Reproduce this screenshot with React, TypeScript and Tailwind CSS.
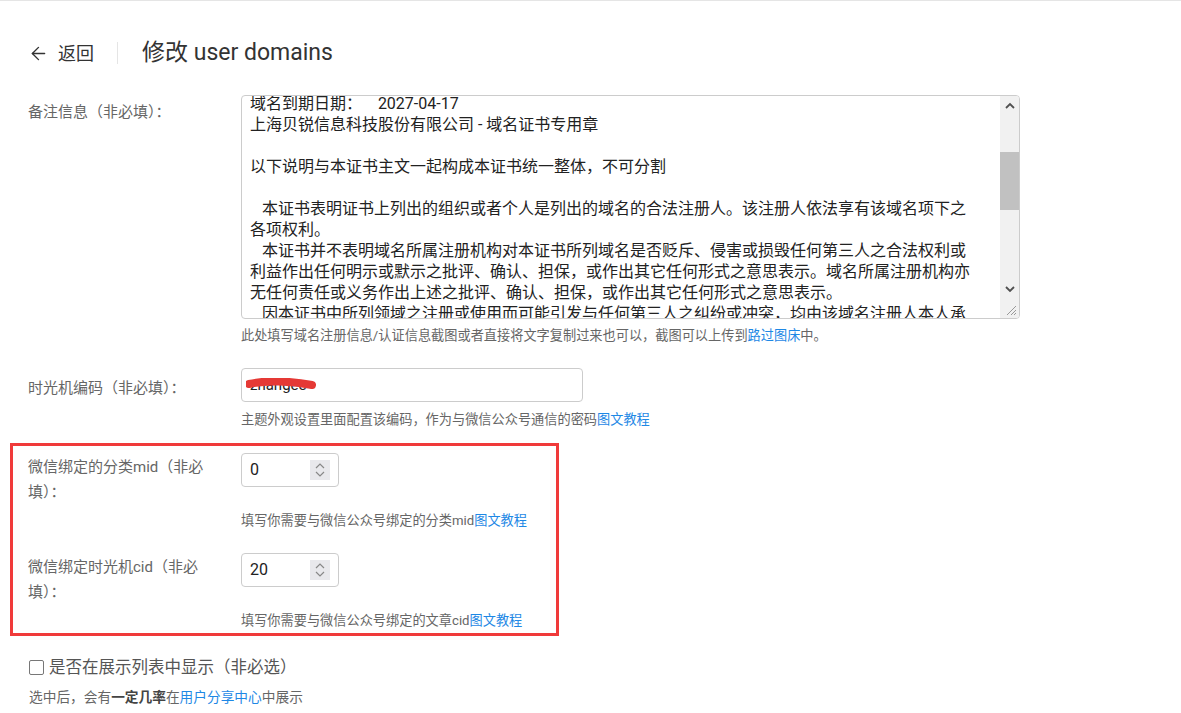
import { ArrowLeft } from 'lucide-react';

const font = { fontFamily: 'Roboto, "Noto Sans CJK SC", sans-serif' };

const noteLines = [
  '域名到期日期：\u00a0\u00a0\u00a0\u00a02027-04-17',
  '上海贝锐信息科技股份有限公司 - 域名证书专用章',
  '\u00a0',
  '以下说明与本证书主文一起构成本证书统一整体，不可分割',
  '\u00a0',
  '\u00a0\u00a0\u00a0本证书表明证书上列出的组织或者个人是列出的域名的合法注册人。该注册人依法享有该域名项下之',
  '各项权利。',
  '\u00a0\u00a0\u00a0本证书并不表明域名所属注册机构对本证书所列域名是否贬斥、侵害或损毁任何第三人之合法权利或',
  '利益作出任何明示或默示之批评、确认、担保，或作出其它任何形式之意思表示。域名所属注册机构亦',
  '无任何责任或义务作出上述之批评、确认、担保，或作出其它任何形式之意思表示。',
  '\u00a0\u00a0\u00a0因本证书中所列领域之注册或使用而可能引发与任何第三人之纠纷或冲突，均由该域名注册人本人承',
];

function Spinner() {
  return (
    <div className="w-[20px] h-[20px] bg-[#e8e8ec] flex flex-col items-center justify-center text-[#888] leading-none">
      <svg width="10" height="6" viewBox="0 0 10 6"><path d="M1 5l4-4 4 4" fill="none" stroke="currentColor" strokeWidth="1.2" /></svg>
      <svg width="10" height="6" viewBox="0 0 10 6" className="mt-[2px]"><path d="M1 1l4 4 4-4" fill="none" stroke="currentColor" strokeWidth="1.2" /></svg>
    </div>
  );
}

function NumberField({ value }: { value: string }) {
  return (
    <div className="w-[98px] h-[34px] border border-[#ccc] rounded-[4px] flex items-center justify-between pl-[8px] pr-[8px] text-[16px] text-[#222]">
      <span>{value}</span>
      <Spinner />
    </div>
  );
}

export default function App() {
  return (
    <div className="w-[1181px] h-[713px] bg-white border-t border-[#e5e5e5] overflow-hidden text-[#333]" style={font}>
      {/* Header */}
      <div className="flex items-center h-[28px] mt-[38px] pl-[28px]">
        <ArrowLeft size={21} strokeWidth={1.6} className="text-[#333]" />
        <span className="ml-[9px] text-[18px] text-[#333]">返回</span>
        <div className="w-px h-[22px] bg-[#e5e5e5] ml-[23px]" />
        <h1 className="ml-[24px] text-[23px] text-[#333]">修改 user domains</h1>
      </div>

      {/* 备注 */}
      <div className="flex mt-[28px]">
        <label className="w-[241px] pl-[28px] pt-[6px] text-[15px] text-[#666]">备注信息（非必填）：</label>
        <div>
          <div className="w-[779px] h-[224px] border border-[#ccc] rounded-[4px] flex overflow-hidden">
            <div className="flex-1 pl-[8px] text-[16px] leading-[21px] text-[#222] overflow-hidden -mt-[3px] whitespace-nowrap">
              {noteLines.map((l, i) => (
                <div key={i}>{l}</div>
              ))}
            </div>
            <div className="w-[19px] bg-[#f1f1f1] flex flex-col items-center relative">
              <svg width="10" height="7" viewBox="0 0 10 7" className="mt-[6px] text-[#505050]"><path d="M1 6l4-4 4 4" fill="none" stroke="currentColor" strokeWidth="1.8" /></svg>
              <div className="w-full h-[58px] bg-[#c1c1c1] mt-[43px]" />
              <div className="flex-1" />
              <svg width="10" height="7" viewBox="0 0 10 7" className="mb-[25px] text-[#505050]"><path d="M1 1l4 4 4-4" fill="none" stroke="currentColor" strokeWidth="1.8" /></svg>
              <svg width="12" height="12" viewBox="0 0 12 12" className="absolute bottom-[2px] right-[2px] text-[#999]"><path d="M11 2L2 11M11 6L6 11M11 9L9 11" stroke="currentColor" strokeWidth="1" /></svg>
            </div>
          </div>
          <p className="mt-[7px] text-[13.2px] text-[#666]">
            此处填写域名注册信息/认证信息截图或者直接将文字复制过来也可以，截图可以上传到<span className="text-[#1e88e5]">路过图床</span>中。
          </p>
        </div>
      </div>

      {/* 时光机编码 */}
      <div className="flex mt-[22px]">
        <label className="w-[241px] pl-[28px] pt-[9px] text-[15px] text-[#666]">时光机编码（非必填）：</label>
        <div>
          <div className="w-[342px] h-[34px] border border-[#ccc] rounded-[4px] flex items-center pl-[8px] relative">
            <span className="text-[15px] text-[#222]">zhangee</span>
            <svg width="70" height="12" viewBox="0 0 70 12" className="absolute left-[4px] top-[9px]"><path d="M3 6 C20 2, 45 3, 66 7" stroke="#e53935" strokeWidth="8" strokeLinecap="round" fill="none" /></svg>
          </div>
          <p className="mt-[8px] text-[13.2px] text-[#666]">
            主题外观设置里面配置该编码，作为与微信公众号通信的密码<span className="text-[#1e88e5]">图文教程</span>
          </p>
        </div>
      </div>

      {/* 红框 */}
      <div className="ml-[10px] mt-[13px] w-[549px] h-[193px] border-[3px] border-[#f03a3a] pt-[7px]">
        <div className="flex">
          <label className="w-[228px] pl-[15px] pt-[2px] text-[15px] leading-[25px] text-[#666]">微信绑定的分类mid（非必<br />填）：</label>
          <div>
            <NumberField value="0" />
            <p className="mt-[24px] text-[13.2px] text-[#666]">填写你需要与微信公众号绑定的分类mid<span className="text-[#1e88e5]">图文教程</span></p>
          </div>
        </div>
        <div className="flex mt-[23px]">
          <label className="w-[228px] pl-[15px] pt-[2px] text-[15px] leading-[25px] text-[#666]">微信绑定时光机cid（非必<br />填）：</label>
          <div>
            <NumberField value="20" />
            <p className="mt-[24px] text-[13.2px] text-[#666]">填写你需要与微信公众号绑定的文章cid<span className="text-[#1e88e5]">图文教程</span></p>
          </div>
        </div>
      </div>

      {/* 复选 */}
      <div className="pl-[29px] mt-[20px]">
        <div className="flex items-center">
          <div className="w-[15px] h-[15px] border-[1.5px] border-[#777] rounded-[2px]" />
          <span className="ml-[5px] text-[16.5px] text-[#555]">是否在展示列表中显示（非必选）</span>
        </div>
        <p className="mt-[7px] text-[13.7px] text-[#666]">
          选中后，会有<span className="font-bold text-[#444]">一定几率</span>在<span className="text-[#1e88e5]">用户分享中心</span>中展示
        </p>
      </div>
    </div>
  );
}
